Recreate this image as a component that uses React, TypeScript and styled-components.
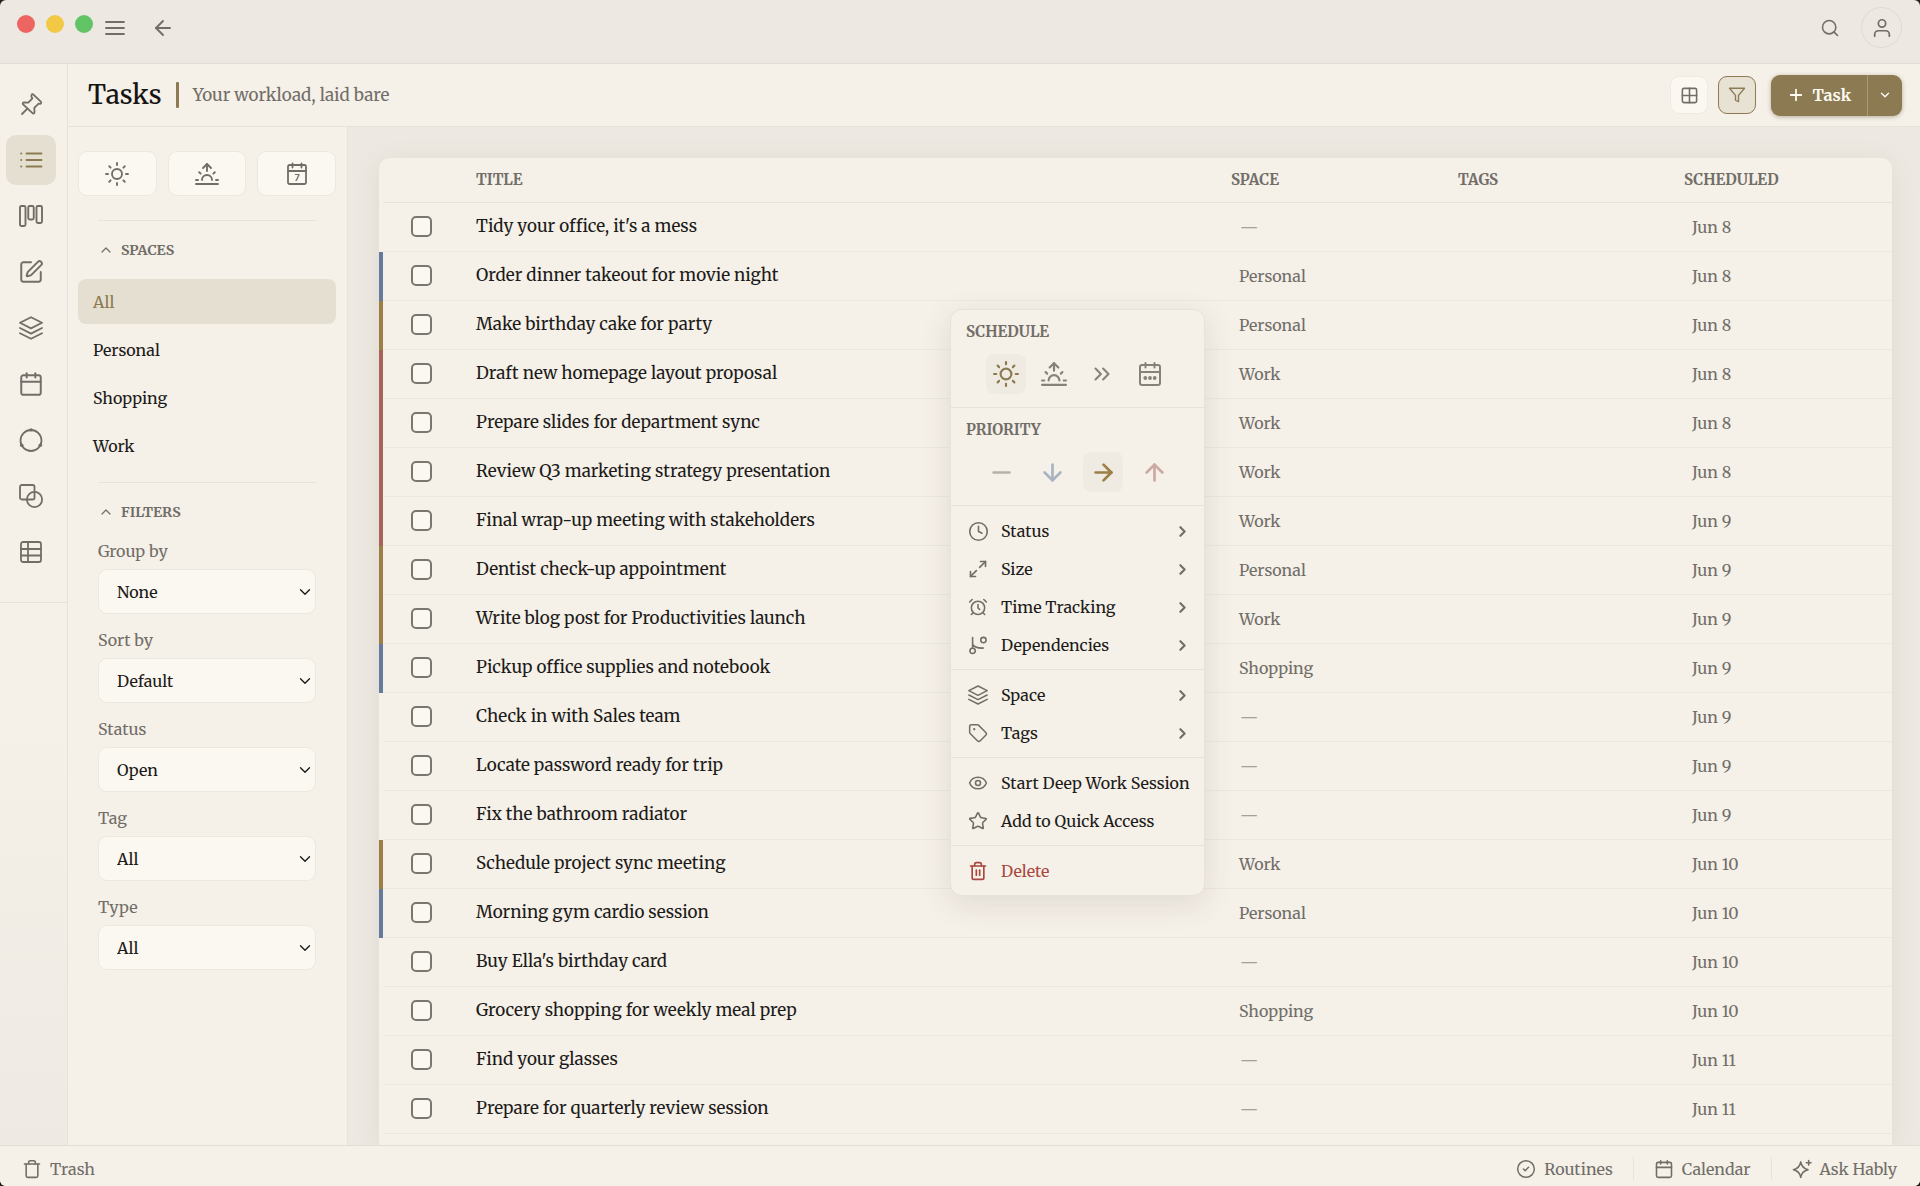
import React from "react";
import styled, { createGlobalStyle, css } from "styled-components";
import {
  AlarmClock,
  ArrowDown,
  ArrowLeft,
  ArrowRight,
  ArrowUp,
  Calendar,
  ChevronDown,
  ChevronRight,
  ChevronUp,
  ChevronsRight,
  CircleCheck,
  Clock4,
  Eye,
  Grid2x2,
  Maximize2,
  Minus,
  Plus,
  Search,
  SquarePen,
  Star,
  Tag,
  Trash,
  Trash2,
} from "lucide-react";
import { FiFilter, FiSun, FiSunrise, FiUser } from "react-icons/fi";

const c = {
  chrome: "#ede9e2",
  panel: "#f5f0e8",
  field: "#fbf8f1",
  line: "#e7e2da",
  rowLine: "#ece7df",
  active: "#e5dfd1",
  gold: "#8b7a52",
  amber: "#9c7f45",
  blue: "#647b9b",
  red: "#a8625a",
  danger: "#a8483f",
  ink: "#1c1b19",
  muted: "#716e68",
};

const serif = 'Merriweather, "DejaVu Serif Condensed", "DejaVu Serif", serif';

const GlobalStyle = createGlobalStyle`
  * { box-sizing: border-box; }
  html { background: #20201f; }
  body { margin: 0; font-family: ${serif}; font-size: 16px; color: ${c.ink}; }
  button, select, input { font: inherit; color: inherit; margin: 0; }
  button { border: 0; background: none; padding: 0; cursor: pointer; }
  svg { flex: none; display: block; }
`;

const Window = styled.div`
  height: 100vh;
  display: flex;
  flex-direction: column;
  overflow: hidden;
  border-radius: 6px;
  background: ${c.chrome};
`;

const TopBar = styled.header`
  flex: none;
  height: 64px;
  display: flex;
  align-items: flex-start;
  padding: 7px 18px 0 17px;
  border-bottom: 1px solid #e2ddd5;
  color: ${c.muted};
`;

const Lights = styled.div`
  display: flex;
  gap: 11px;
  padding-top: 8px;
  margin-right: 2px;
`;

const Light = styled.span<{ $color: string }>`
  width: 18px;
  height: 18px;
  border-radius: 50%;
  background: ${(p) => p.$color};
`;

const IconButton = styled.button`
  width: 40px;
  height: 41px;
  display: grid;
  place-items: center;
`;

const TopNav = styled.div`
  display: flex;
  gap: 8px;
`;

const Spacer = styled.div`
  flex: 1;
`;

const Avatar = styled.button`
  width: 41px;
  height: 41px;
  margin-left: 11px;
  border: 1px solid #dfdad1;
  border-radius: 50%;
  display: grid;
  place-items: center;
`;

const Body = styled.div`
  flex: 1;
  min-height: 0;
  display: flex;
`;

const Rail = styled.nav`
  flex: none;
  width: 68px;
  border-right: 1px solid ${c.line};
  background: linear-gradient(180deg, ${c.panel} 60%, #eeeae3);
  color: ${c.muted};
`;

const RailGroup = styled.div`
  display: flex;
  flex-direction: column;
  gap: 6px;
  padding: 15px 0 25px 6px;
  border-bottom: 1px solid ${c.line};
`;

const RailButton = styled.button<{ $active?: boolean }>`
  width: 50px;
  height: 50px;
  border-radius: 10px;
  display: grid;
  place-items: center;
  ${(p) => p.$active && css`background: ${c.active}; color: ${c.gold};`}
`;

const Content = styled.div`
  flex: 1;
  min-width: 0;
  display: flex;
  flex-direction: column;
`;

const PageHeader = styled.div`
  flex: none;
  height: 63px;
  display: flex;
  align-items: center;
  padding: 0 18px 0 20px;
  background: ${c.panel};
  border-bottom: 1px solid ${c.line};
`;

const Title = styled.h1`
  margin: 0;
  font-size: 26px;
  font-weight: 500;
  line-height: 36px;
  color: #161513;
`;

const Accent = styled.span`
  width: 3px;
  height: 26px;
  margin: 0 14px;
  background: ${c.gold};
  border-radius: 1px;
`;

const Subtitle = styled.p`
  margin: 0;
  font-size: 17px;
  color: ${c.muted};
`;

const Tool = styled.button<{ $on?: boolean }>`
  width: 38px;
  height: 38px;
  margin-left: 10px;
  border-radius: 9px;
  border: 1px solid ${(p) => (p.$on ? c.gold : "#f0ebe2")};
  background: ${(p) => (p.$on ? "#e8e2d5" : c.field)};
  color: ${(p) => (p.$on ? c.gold : c.muted)};
  display: grid;
  place-items: center;
`;

const SplitButton = styled.div`
  display: flex;
  height: 41px;
  margin-left: 15px;
  border-radius: 9px;
  background: ${c.gold};
  color: #fdfaf2;
  box-shadow: 0 1px 4px rgba(90, 75, 40, 0.4);
`;

const NewTask = styled.button`
  display: flex;
  align-items: center;
  gap: 7px;
  padding: 0 16px;
  font-weight: 700;
`;

const NewTaskMore = styled.button`
  width: 35px;
  display: grid;
  place-items: center;
  border-left: 1px solid #a99a77;
`;

const Workspace = styled.div`
  flex: 1;
  min-height: 0;
  display: flex;
`;

const FilterPanel = styled.aside`
  flex: none;
  width: 280px;
  padding: 24px 11px 0 10px;
  border-right: 1px solid ${c.line};
  background: ${c.panel};
  overflow: hidden;
`;

const QuickRow = styled.div`
  display: grid;
  grid-template-columns: repeat(3, 1fr);
  gap: 11px;
  margin-bottom: 24px;
`;

const QuickButton = styled.button`
  height: 45px;
  border: 1px solid #ede8df;
  border-radius: 9px;
  background: ${c.field};
  color: ${c.muted};
  display: grid;
  place-items: center;
`;

const Rule = styled.hr`
  height: 1px;
  margin: 0 20px;
  border: 0;
  background: ${c.line};
`;

const capsText = css`
  font-size: 15px;
  font-weight: 700;
  line-height: 16px;
  color: ${c.muted};
  text-transform: uppercase;
`;

const SectionToggle = styled.button`
  ${capsText}
  font-size: 14px;
  display: flex;
  align-items: center;
  gap: 7px;
  padding: 21px 20px;
`;

const SpaceItem = styled.button<{ $active?: boolean }>`
  display: block;
  width: 100%;
  height: 45px;
  margin-bottom: 3px;
  padding: 0 15px;
  border-radius: 8px;
  text-align: left;
  ${(p) => p.$active && css`background: ${c.active}; color: ${c.gold};`}
`;

const SpaceList = styled.div`
  padding-bottom: 11px;
`;

const Fields = styled.div`
  display: flex;
  flex-direction: column;
  gap: 16px;
  margin: 0 20px;
`;

const Field = styled.label`
  display: block;
  line-height: 20px;
  color: ${c.muted};
`;

const SelectWrap = styled.span`
  position: relative;
  display: block;
  margin-top: 8px;
  color: ${c.ink};

  svg {
    position: absolute;
    right: 2px;
    top: 14px;
    pointer-events: none;
  }
`;

const Select = styled.select`
  appearance: none;
  display: block;
  width: 100%;
  height: 45px;
  padding: 0 18px;
  border: 1px solid #ede8df;
  border-radius: 9px;
  background: ${c.field};
`;

const Main = styled.main`
  flex: 1;
  min-width: 0;
  display: flex;
  flex-direction: column;
  padding: 31px 28px 0 31px;
  overflow: hidden;
`;

const Card = styled.div`
  flex: 1 0 auto;
  background: ${c.panel};
  border-radius: 11px 11px 0 0;
  box-shadow: 0 4px 24px rgba(120, 105, 70, 0.12);
`;

const Table = styled.table`
  width: 100%;
  table-layout: fixed;
  border-collapse: collapse;
`;

const Col = styled.col<{ $w?: number }>`
  width: ${(p) => (p.$w ? `${p.$w}px` : "auto")};
`;

const Th = styled.th`
  ${capsText}
  height: 45px;
  padding: 0 0 1px;
  text-align: left;
  box-shadow: inset 0 -1px ${c.line};
`;

const Td = styled.td<{ $muted?: boolean; $title?: boolean }>`
  height: 49px;
  padding: 0 0 3px;
  box-shadow: inset 0 -1px ${c.rowLine};
  white-space: nowrap;
  ${(p) => p.$title && css`padding: 0 0 4px; font-size: 17px;`}
  ${(p) => p.$muted && css`padding: 0 0 1px 8px; color: ${c.muted};`}
`;

const Stripe = styled.td<{ $color?: string }>`
  padding: 0;
  background: ${(p) => p.$color ?? "transparent"};
`;

const Check = styled.input`
  appearance: none;
  display: block;
  width: 21px;
  height: 21px;
  margin: 0 0 0 28px;
  border: 2px solid #7a7771;
  border-radius: 5px;
  background: ${c.field};
`;

const Dash = styled.span`
  padding-left: 1px;
  color: #a5a19a;
`;

const ContextMenu = styled.div`
  position: absolute;
  left: 950px;
  top: 309px;
  width: 255px;
  border: 1px solid ${c.line};
  border-radius: 12px;
  background: ${c.panel};
  box-shadow: 0 8px 30px rgba(90, 80, 60, 0.13);
`;

const PickSection = styled.div`
  padding: 14px 0 13px;
  border-bottom: 1px solid ${c.line};
`;

const PickLabel = styled.div`
  ${capsText}
  padding: 0 15px;
  margin-bottom: 14px;
`;

const PickRow = styled.div<{ $gap: number }>`
  display: flex;
  justify-content: center;
  gap: ${(p) => p.$gap}px;
`;

const Pick = styled.button<{ $active?: boolean; $color?: string }>`
  width: 40px;
  height: 40px;
  border-radius: 8px;
  display: grid;
  place-items: center;
  color: ${(p) => p.$color ?? "#85827b"};
  ${(p) => p.$active && css`background: #f0ebe2;`}
`;

const ItemSection = styled.div`
  padding: 6px 0 5px;

  & + & {
    border-top: 1px solid ${c.line};
  }
`;

const Item = styled.button<{ $danger?: boolean }>`
  width: 100%;
  height: 38px;
  display: grid;
  grid-template-columns: 20px 1fr auto;
  align-items: center;
  column-gap: 13px;
  padding: 0 13px 0 17px;
  text-align: left;
  white-space: nowrap;
  color: ${(p) => (p.$danger ? c.danger : c.ink)};

  svg {
    color: ${(p) => (p.$danger ? c.danger : c.muted)};
  }
`;

const Footer = styled.footer`
  flex: none;
  height: 41px;
  display: flex;
  align-items: center;
  padding: 5px 23px 0 22px;
  border-top: 1px solid #e2ddd5;
  background: ${c.panel};
  color: ${c.muted};
`;

const FooterButton = styled.button`
  display: flex;
  align-items: center;
  gap: 8px;
`;

const FooterDivider = styled.span`
  width: 1px;
  height: 23px;
  margin: 0 20px;
  background: ${c.line};
`;

type IconProps = { size?: number; children?: React.ReactNode; stroke?: number };

const Glyph = ({ size = 24, stroke = 2, children }: IconProps) => (
  <svg
    width={size}
    height={size}
    viewBox="0 0 24 24"
    fill="none"
    stroke="currentColor"
    strokeWidth={stroke}
    strokeLinecap="round"
    strokeLinejoin="round"
    aria-hidden="true"
  >
    {children}
  </svg>
);

const MenuGlyph = () => (
  <Glyph stroke={1.8}>
    <path d="M3 6h18M3 12h18M3 18h18" />
  </Glyph>
);

const PinGlyph = () => (
  <Glyph stroke={1.8}>
    <path d="M14.2 2.4 21.8 9.6c.9.9.2 2.3-1 2.2l-1.2-.1-4.3 4.2.2 4.3c0 1.2-1.2 1.8-2 1L4.1 12.4c-.8-.9-.2-2 .9-2l4.3.2 4.1-4.3-.9-1.6c-.6-1.3.6-3.2 1.7-2.3z" />
    <path d="M8.4 16.6 3 22" />
  </Glyph>
);

const ListGlyph = () => (
  <Glyph stroke={1.9}>
    <path d="M7.5 5.5h15M7.5 12h15M7.5 18.5h15" />
    <path d="M2.2 5.5h.1M2.2 12h.1M2.2 18.5h.1" />
  </Glyph>
);

const KanbanGlyph = () => (
  <Glyph stroke={1.9}>
    <rect x="1" y="2" width="5.5" height="20" rx="1.5" />
    <rect x="9.25" y="2" width="5.5" height="13.5" rx="1.5" />
    <rect x="17.5" y="2" width="5.5" height="17" rx="1.5" />
  </Glyph>
);

const LayersGlyph = ({ size = 24 }: IconProps) => (
  <Glyph size={size} stroke={1.8}>
    <path d="M12 1.2 23 6.8 12 12.4 1 6.8z" />
    <path d="m1 12 11 5.6L23 12" />
    <path d="m1 17.2 11 5.6 11-5.6" />
  </Glyph>
);

const OrbitGlyph = () => (
  <Glyph stroke={1.8}>
    <circle cx="12" cy="12.5" r="10.5" />
    <g fill="currentColor" stroke="none">
      <circle cx="12" cy="1.9" r="1.7" />
      <circle cx="2.7" cy="17.3" r="1.8" />
      <circle cx="21.3" cy="17.3" r="1.8" />
    </g>
  </Glyph>
);

const ShapesGlyph = () => (
  <Glyph stroke={1.8}>
    <rect x="1" y="1" width="14.5" height="14.5" rx="1.8" />
    <circle cx="15.5" cy="15.5" r="7.6" />
  </Glyph>
);

const TableGlyph = () => (
  <Glyph stroke={1.8}>
    <rect x="2" y="2" width="20" height="20" rx="2" />
    <path d="M2 9h20M2 15.5h20M9 2v20" />
  </Glyph>
);

const CalendarSevenGlyph = () => (
  <Glyph stroke={1.8}>
    <rect x="3" y="3" width="18" height="19" rx="1.5" />
    <path d="M3 9h18M7.5 1.5v4M16.5 1.5v4" />
    <text
      x="12"
      y="19"
      textAnchor="middle"
      fontSize="9"
      fontWeight="700"
      fontFamily="Inter, sans-serif"
      fill="currentColor"
      stroke="none"
    >
      7
    </text>
  </Glyph>
);

const CalendarDotsGlyph = () => (
  <Glyph stroke={2}>
    <rect x="2" y="3" width="20" height="20" rx="2" />
    <path d="M2 10h20M7.5 1v4.5M16.5 1v4.5" />
    <g fill="currentColor" stroke="none">
      <circle cx="7.3" cy="16" r="1.9" />
      <circle cx="12" cy="16" r="1.9" />
      <circle cx="16.7" cy="16" r="1.9" />
    </g>
  </Glyph>
);

const BranchGlyph = () => (
  <Glyph size={20} stroke={1.9}>
    <circle cx="5.5" cy="19" r="3.2" />
    <circle cx="18.5" cy="6" r="3.2" />
    <path d="M5.5 15.8V3M5.5 11c1.5 3.5 5 5 13 4.7" />
  </Glyph>
);

const SparkGlyph = () => (
  <Glyph size={20} stroke={1.9}>
    <path d="M10.5 3.5c.9 5.6 3.2 8.1 8.8 9.3-5.6 1.2-7.9 3.6-8.8 9.2-.9-5.6-3.2-8-8.8-9.2 5.6-1.2 7.9-3.7 8.8-9.3z" />
    <path d="M20 1.7v5.6M17.2 4.5h5.6" />
  </Glyph>
);

const rail: [string, React.ReactNode][] = [
  ["Pinned", <PinGlyph />],
  ["Tasks", <ListGlyph />],
  ["Board", <KanbanGlyph />],
  ["Notes", <SquarePen size={26} strokeWidth={1.8} />],
  ["Spaces", <LayersGlyph />],
  ["Calendar", <Calendar size={26} strokeWidth={1.8} />],
  ["Habits", <OrbitGlyph />],
  ["Shapes", <ShapesGlyph />],
  ["Tables", <TableGlyph />],
];

const fields: [string, string][] = [
  ["Group by", "None"],
  ["Sort by", "Default"],
  ["Status", "Open"],
  ["Tag", "All"],
  ["Type", "All"],
];

type Task = { title: string; space?: string; date: string; color?: string };

const tasks: Task[] = [
  { title: "Tidy your office, it's a mess", date: "Jun 8" },
  { title: "Order dinner takeout for movie night", space: "Personal", date: "Jun 8", color: c.blue },
  { title: "Make birthday cake for party", space: "Personal", date: "Jun 8", color: c.amber },
  { title: "Draft new homepage layout proposal", space: "Work", date: "Jun 8", color: c.red },
  { title: "Prepare slides for department sync", space: "Work", date: "Jun 8", color: c.red },
  { title: "Review Q3 marketing strategy presentation", space: "Work", date: "Jun 8", color: c.red },
  { title: "Final wrap-up meeting with stakeholders", space: "Work", date: "Jun 9", color: c.red },
  { title: "Dentist check-up appointment", space: "Personal", date: "Jun 9", color: c.amber },
  { title: "Write blog post for Productivities launch", space: "Work", date: "Jun 9", color: c.amber },
  { title: "Pickup office supplies and notebook", space: "Shopping", date: "Jun 9", color: c.blue },
  { title: "Check in with Sales team", date: "Jun 9" },
  { title: "Locate password ready for trip", date: "Jun 9" },
  { title: "Fix the bathroom radiator", date: "Jun 9" },
  { title: "Schedule project sync meeting", space: "Work", date: "Jun 10", color: c.amber },
  { title: "Morning gym cardio session", space: "Personal", date: "Jun 10", color: c.blue },
  { title: "Buy Ella's birthday card", date: "Jun 10" },
  { title: "Grocery shopping for weekly meal prep", space: "Shopping", date: "Jun 10" },
  { title: "Find your glasses", date: "Jun 11" },
  { title: "Prepare for quarterly review session", date: "Jun 11" },
];

const menuGroups: { label: string; icon: React.ReactNode; sub?: boolean; danger?: boolean }[][] = [
  [
    { label: "Status", icon: <Clock4 size={21} strokeWidth={1.8} />, sub: true },
    { label: "Size", icon: <Maximize2 size={20} strokeWidth={2} />, sub: true },
    { label: "Time Tracking", icon: <AlarmClock size={20} strokeWidth={1.9} />, sub: true },
    { label: "Dependencies", icon: <BranchGlyph />, sub: true },
  ],
  [
    { label: "Space", icon: <LayersGlyph size={20} />, sub: true },
    { label: "Tags", icon: <Tag size={20} strokeWidth={1.8} />, sub: true },
  ],
  [
    { label: "Start Deep Work Session", icon: <Eye size={20} strokeWidth={1.9} /> },
    { label: "Add to Quick Access", icon: <Star size={20} strokeWidth={1.9} /> },
  ],
  [{ label: "Delete", icon: <Trash2 size={20} strokeWidth={2} />, danger: true }],
];

const TaskMenu = () => (
  <ContextMenu role="menu">
    <PickSection>
      <PickLabel>Schedule</PickLabel>
      <PickRow $gap={8}>
        <Pick $active $color={c.gold} aria-label="Today"><FiSun size={26} /></Pick>
        <Pick aria-label="Tomorrow"><FiSunrise size={26} /></Pick>
        <Pick aria-label="Next week"><ChevronsRight size={26} strokeWidth={1.9} /></Pick>
        <Pick aria-label="Pick a date"><CalendarDotsGlyph /></Pick>
      </PickRow>
    </PickSection>
    <PickSection>
      <PickLabel>Priority</PickLabel>
      <PickRow $gap={11}>
        <Pick $color="#b5b0a8" aria-label="None"><Minus size={27} strokeWidth={2.4} /></Pick>
        <Pick $color="#a9b4c3" aria-label="Low"><ArrowDown size={27} strokeWidth={2.4} /></Pick>
        <Pick $active $color={c.amber} aria-label="Medium"><ArrowRight size={27} strokeWidth={2.4} /></Pick>
        <Pick $color="#cda9a3" aria-label="High"><ArrowUp size={27} strokeWidth={2.4} /></Pick>
      </PickRow>
    </PickSection>
    {menuGroups.map((group, i) => (
      <ItemSection key={i}>
        {group.map((item) => (
          <Item key={item.label} role="menuitem" $danger={item.danger}>
            {item.icon}
            <span>{item.label}</span>
            {item.sub && <ChevronRight size={17} strokeWidth={3} />}
          </Item>
        ))}
      </ItemSection>
    ))}
  </ContextMenu>
);

export default function App() {
  return (
    <>
      <GlobalStyle />
      <Window>
        <TopBar>
          <Lights>
            <Light $color="#ed6560" />
            <Light $color="#f2c944" />
            <Light $color="#62c466" />
          </Lights>
          <TopNav>
            <IconButton aria-label="Menu"><MenuGlyph /></IconButton>
            <IconButton aria-label="Back"><ArrowLeft size={24} strokeWidth={1.9} /></IconButton>
          </TopNav>
          <Spacer />
          <IconButton aria-label="Search"><Search size={20} strokeWidth={1.9} /></IconButton>
          <Avatar aria-label="Account"><FiUser size={22} strokeWidth={1.9} /></Avatar>
        </TopBar>
        <Body>
          <Rail>
            <RailGroup>
              {rail.map(([label, icon]) => (
                <RailButton key={label} aria-label={label} $active={label === "Tasks"}>
                  {icon}
                </RailButton>
              ))}
            </RailGroup>
          </Rail>
          <Content>
            <PageHeader>
              <Title>Tasks</Title>
              <Accent />
              <Subtitle>Your workload, laid bare</Subtitle>
              <Spacer />
              <Tool aria-label="Layout"><Grid2x2 size={19} strokeWidth={2} /></Tool>
              <Tool $on aria-label="Filter"><FiFilter size={18} strokeWidth={1.8} /></Tool>
              <SplitButton>
                <NewTask><Plus size={18} strokeWidth={2.4} />Task</NewTask>
                <NewTaskMore aria-label="More"><ChevronDown size={14} strokeWidth={2.4} /></NewTaskMore>
              </SplitButton>
            </PageHeader>
            <Workspace>
              <FilterPanel>
                <QuickRow>
                  <QuickButton aria-label="Today"><FiSun size={24} strokeWidth={1.9} /></QuickButton>
                  <QuickButton aria-label="Tomorrow"><FiSunrise size={24} strokeWidth={1.9} /></QuickButton>
                  <QuickButton aria-label="This week"><CalendarSevenGlyph /></QuickButton>
                </QuickRow>
                <Rule />
                <SectionToggle><ChevronUp size={16} strokeWidth={1.8} />Spaces</SectionToggle>
                <SpaceList>
                  {["All", "Personal", "Shopping", "Work"].map((s) => (
                    <SpaceItem key={s} $active={s === "All"}>{s}</SpaceItem>
                  ))}
                </SpaceList>
                <Rule />
                <SectionToggle><ChevronUp size={16} strokeWidth={1.8} />Filters</SectionToggle>
                <Fields>
                  {fields.map(([label, value]) => (
                    <Field key={label}>
                      {label}
                      <SelectWrap>
                        <Select defaultValue={value}><option>{value}</option></Select>
                        <ChevronDown size={18} strokeWidth={1.8} />
                      </SelectWrap>
                    </Field>
                  ))}
                </Fields>
              </FilterPanel>
              <Main>
                <Card>
                  <Table>
                    <colgroup>
                      <Col $w={4} />
                      <Col $w={93} />
                      <Col />
                      <Col $w={227} />
                      <Col $w={226} />
                      <Col $w={208} />
                    </colgroup>
                    <thead>
                      <tr>
                        <Stripe />
                        <Th aria-label="Done" />
                        <Th>Title</Th>
                        <Th>Space</Th>
                        <Th>Tags</Th>
                        <Th>Scheduled</Th>
                      </tr>
                    </thead>
                    <tbody>
                      {tasks.map((t) => (
                        <tr key={t.title}>
                          <Stripe $color={t.color} />
                          <Td><Check type="checkbox" aria-label={t.title} /></Td>
                          <Td $title>{t.title}</Td>
                          <Td $muted>{t.space ?? <Dash>—</Dash>}</Td>
                          <Td />
                          <Td $muted>{t.date}</Td>
                        </tr>
                      ))}
                    </tbody>
                  </Table>
                </Card>
              </Main>
            </Workspace>
          </Content>
        </Body>
        <Footer>
          <FooterButton><Trash size={20} strokeWidth={1.9} />Trash</FooterButton>
          <Spacer />
          <FooterButton><CircleCheck size={20} strokeWidth={1.8} />Routines</FooterButton>
          <FooterDivider />
          <FooterButton><Calendar size={20} strokeWidth={1.9} />Calendar</FooterButton>
          <FooterDivider />
          <FooterButton><SparkGlyph />Ask Hably</FooterButton>
        </Footer>
        <TaskMenu />
      </Window>
    </>
  );
}
